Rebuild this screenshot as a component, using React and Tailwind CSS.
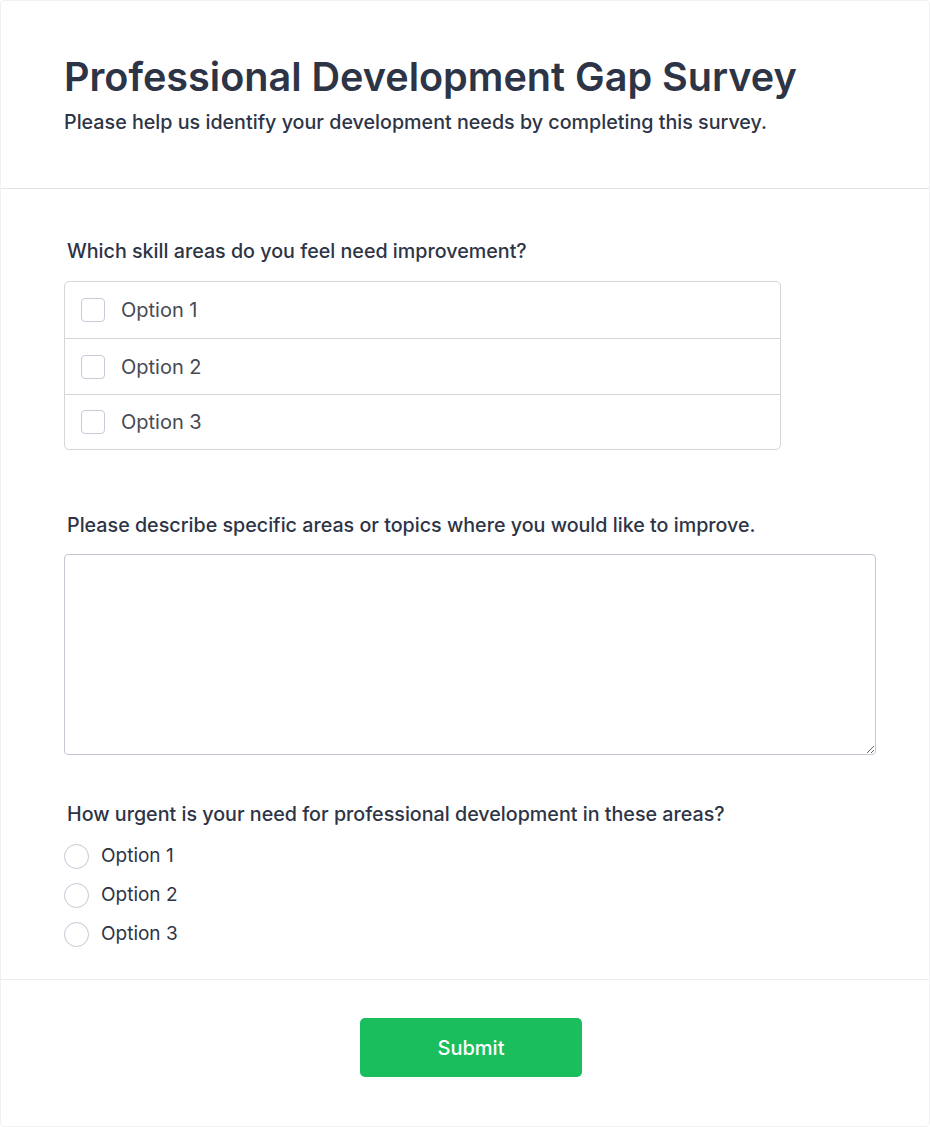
export default function App() {
  const options = ['Option 1', 'Option 2', 'Option 3'];
  const rowHeights = ['h-[56px]', 'h-[56px]', 'h-[55px]'];

  return (
    <div className="min-h-screen bg-white font-['Inter',sans-serif]">
      <div className="w-[930px] h-[1127px] border border-[#f1f1f4] rounded-sm bg-white">
        {/* Header */}
        <div className="px-[63px] pt-[52px] pb-[52px] border-b border-[#dfe3ea]">
          <h1 className="text-[39.6px] leading-[48px] font-semibold text-[#2d3446]">
            Professional Development Gap Survey
          </h1>
          <p className="mt-[7px] text-[19.7px] leading-[28px] font-medium text-[#2d3446]">
            Please help us identify your development needs by completing this survey.
          </p>
        </div>

        {/* Questions */}
        <div className="px-[63px] pt-[48px] pb-[31px] border-b border-[#ececf1]">
          <label className="block pl-[3px] text-[19.7px] leading-[28px] font-medium text-[#2d3446]">
            Which skill areas do you feel need improvement?
          </label>
          <div className="mt-[16px] w-[717px] border border-[#d6d6d9] rounded-[5px]">
            {options.map((opt, i) => (
              <div
                key={opt}
                className={`flex items-center gap-4 px-4 ${rowHeights[i]} ${i > 0 ? 'border-t border-[#d6d6d9]' : ''}`}
              >
                <span className="w-[24px] h-[24px] rounded-[4px] border border-[#c9cbd6] bg-white" />
                <span className="text-[20px] leading-[28px] text-[#474a52]">{opt}</span>
              </div>
            ))}
          </div>

          <label className="block mt-[61px] pl-[3px] text-[19.7px] leading-[28px] font-medium text-[#2d3446]">
            Please describe specific areas or topics where you would like to improve.
          </label>
          <textarea className="block mt-[15px] w-[812px] h-[201px] border border-[#c4c7d4] rounded-[4px] bg-white p-3 outline-none" />

          <label className="block mt-[45px] pl-[3px] text-[19.7px] leading-[28px] font-medium text-[#2d3446]">
            How urgent is your need for professional development in these areas?
          </label>
          <div className="mt-[14px] flex flex-col gap-[11px]">
            {options.map((opt) => (
              <div key={opt} className="flex items-center gap-[12px] h-[28px]">
                <span className="w-[25px] h-[25px] rounded-full border border-[#c4c7d4] bg-white" />
                <span className="text-[19px] leading-[28px] text-[#2d3446]">{opt}</span>
              </div>
            ))}
          </div>
        </div>

        {/* Footer */}
        <div className="flex justify-center pl-[12px] pt-[38px]">
          <button className="w-[222px] h-[59px] rounded-[5px] bg-[#1abe5c] text-white text-[20px] font-medium">
            Submit
          </button>
        </div>
      </div>
    </div>
  );
}
